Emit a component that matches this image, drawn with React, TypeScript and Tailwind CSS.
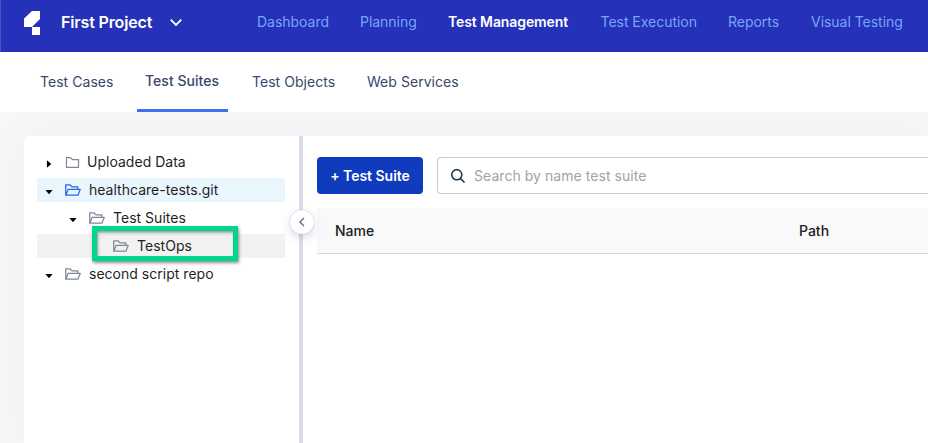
import React from "react";
import { AiFillCaretDown, AiFillCaretRight, AiOutlineFolder, AiOutlineFolderOpen } from "react-icons/ai";

const navItems = [
  { label: "Dashboard", cls: "w-[103px] text-[#79a6f6]" },
  { label: "Planning", cls: "w-[88px] text-[#79a6f6]" },
  { label: "Test Management", cls: "w-[152.5px] font-semibold text-white tracking-[-0.1px]" },
  { label: "Test Execution", cls: "w-[127.5px] text-[#79a6f6]" },
  { label: "Reports", cls: "w-[83px] text-[#79a6f6]" },
  { label: "Visual Testing", cls: "text-[#79a6f6]" },
];

function Header() {
  return (
    <header className="flex h-[52px] items-center border-l border-[#4a55c4] bg-[#2431b8] pb-[8px]">
      <svg className="ml-[23px] mt-[2px] h-6 w-4 shrink-0" viewBox="0 0 16 24" fill="#fff">
        <path d="M8 0h8v8l-8 8H0V7.5z" />
        <path d="M8 16h8v8H8z" />
      </svg>
      <div className="ml-[21px] w-[109px] shrink-0 text-base font-semibold tracking-[-0.15px] text-white">First Project</div>
      <svg className="h-3 w-3 shrink-0" viewBox="0 0 12 12" fill="none" stroke="#fff" strokeWidth="1.9">
        <path d="M.7 3.7 6 9l5.3-5.3" />
      </svg>
      <nav className="ml-[75px] flex shrink-0 text-sm tracking-[-0.03px]">
        {navItems.map((n) => (
          <a key={n.label} className={"shrink-0 whitespace-nowrap " + n.cls}>{n.label}</a>
        ))}
      </nav>
    </header>
  );
}

function SubNav() {
  return (
    <div className="z-10 flex h-[60px] shrink-0 bg-white pl-[40px] text-sm leading-[60px] tracking-[0.04px] text-[#38476b]">
      <a className="w-[97px]">Test Cases</a>
      <a className="w-[91px] border-b-3 border-[#436df0] pl-[8px] font-medium leading-[58px]">Test Suites</a>
      <a className="ml-[24px] w-[115px]">Test Objects</a>
      <a>Web Services</a>
    </div>
  );
}

interface RowProps {
  label: string;
  row?: string;
  icon?: string;
  closed?: boolean;
  leaf?: boolean;
}

function TreeRow({ label, row = "", icon = "text-[#7d8796]", closed, leaf }: RowProps) {
  return (
    <div className={"mb-1 flex h-6 items-center text-sm tracking-[0.02px] text-[#1f1f1f] " + row}>
      <span className="flex w-6 shrink-0 justify-center pt-[3px] text-black">
        {leaf ? null : closed ? <AiFillCaretRight size={10} /> : <AiFillCaretDown size={10} />}
      </span>
      <span className={"ml-[3px] shrink-0 " + icon}>
        {closed ? <AiOutlineFolder size={17} /> : <AiOutlineFolderOpen size={18} />}
      </span>
      <span className={closed ? "ml-[6px] whitespace-nowrap" : "ml-[7px] whitespace-nowrap"}>{label}</span>
    </div>
  );
}

function Tree() {
  return (
    <aside className="relative w-[275px] shrink-0 rounded-tl-md bg-white pl-[13px] pr-[14px] pt-[14px]">
      <TreeRow label="Uploaded Data" closed />
      <TreeRow label="healthcare-tests.git" row="bg-[#eaf6fe]" icon="text-[#2563eb]" />
      <TreeRow label="Test Suites" row="pl-6" />
      <TreeRow label="TestOps" row="bg-[#f2f2f2] pl-12" leaf />
      <TreeRow label="second script repo" />
      <div className="absolute left-[68px] top-[90px] h-[35px] w-[146px] border-5 border-[#00d491] shadow-[1px_2px_3px_rgba(0,0,0,0.45),inset_1px_2px_3px_rgba(0,0,0,0.4)]" />
    </aside>
  );
}

function Divider() {
  return (
    <div className="relative z-10 w-1 shrink-0 bg-[#d8dde8]">
      <button className="absolute left-[-9px] top-[74px] flex h-6 w-6 items-center justify-center rounded-full bg-white shadow-[0_0_1px_rgba(60,70,130,0.5),0_4px_10px_rgba(60,70,130,0.18)]">
        <svg className="h-[10px] w-[8px]" viewBox="0 0 8 10" fill="none" stroke="#5f6b7e" strokeWidth="1.4">
          <path d="M6 1 2 5l4 4" />
        </svg>
      </button>
    </div>
  );
}

function Content() {
  return (
    <main className="min-w-0 flex-1 bg-white pl-[14px] pt-[21px]">
      <div className="flex h-[37px] gap-[14px]">
        <button className="w-[106px] shrink-0 rounded bg-[#103bbd] text-sm font-semibold tracking-[-0.03px] text-white">+ Test Suite</button>
        <div className="flex flex-1 items-center rounded-l border border-r-0 border-[#c7cbd1] pl-[13px] text-sm tracking-[0.05px] text-[#a0a2a5]">
          <svg className="mr-[9px] h-[14px] w-[14px]" viewBox="0 0 15 15" fill="none" stroke="#263747" strokeWidth="1.7">
            <circle cx="6.2" cy="6.2" r="5.4" />
            <path d="m10 10 4.5 4.5" />
          </svg>
          Search by name test suite
        </div>
      </div>
      <div className="mt-[14px] flex h-[46px] items-center border-b border-[#d7d9dc] bg-[#f9f9f9] pl-[18px] text-sm font-medium text-[#202124]">
        <span className="w-[464px]">Name</span>
        <span>Path</span>
      </div>
    </main>
  );
}

export default function App() {
  return (
    <div className="flex h-[443px] w-[928px] flex-col overflow-hidden bg-[#f6f7f9] font-['Inter',sans-serif]">
      <Header />
      <SubNav />
      <div className="flex min-h-0 flex-1 pl-[24px] pt-[24px]">
        <div className="flex min-w-0 flex-1 rounded-tl-md shadow-[0_0_40px_rgba(0,0,0,0.04)]">
          <Tree />
          <Divider />
          <Content />
        </div>
      </div>
    </div>
  );
}
